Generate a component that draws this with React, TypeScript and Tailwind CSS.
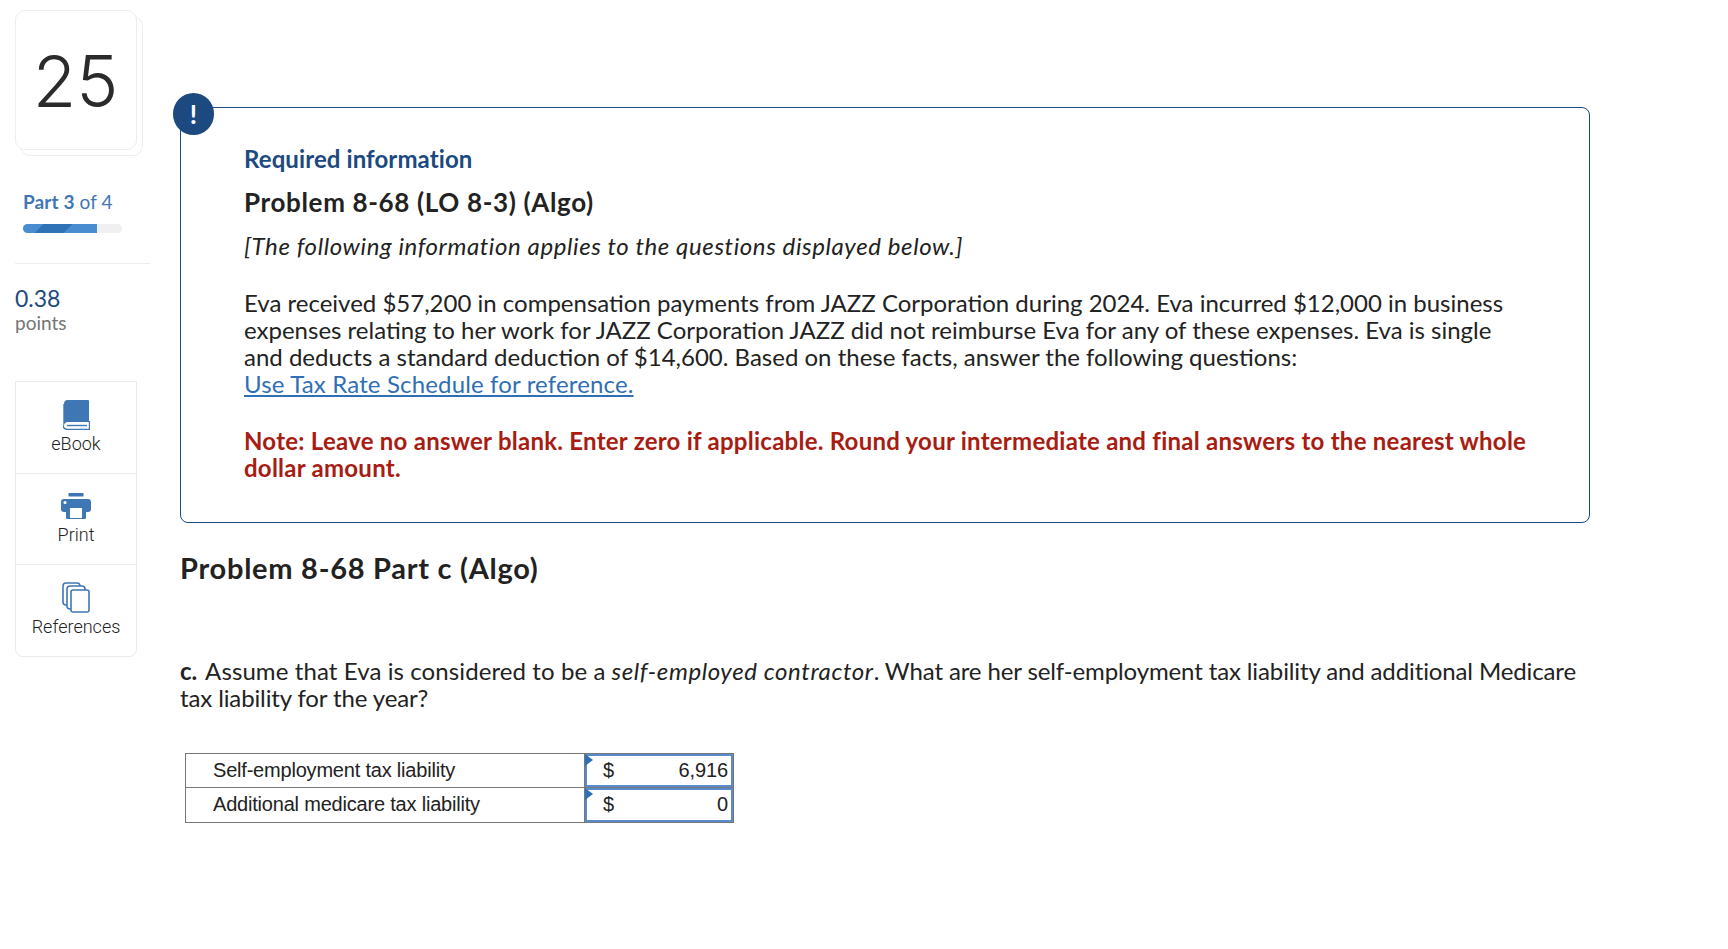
const sans = "font-['Lato','Open_Sans',sans-serif]";

function BookIcon() {
  return (
    <svg width="27" height="30" viewBox="0 0 27 30">
      <path d="M4 0H25a1 1 0 0 1 1 1V22H5a4 4 0 0 0-4 3.5V4a4 4 0 0 1 3-4Z" fill="#3f77b5" />
      <path d="M0 4V25a4.5 4.5 0 0 0 4.5 4.5H26.5V21" fill="none" stroke="#3f77b5" strokeWidth="1.4" />
      <path d="M4 25.500H24" stroke="#3f77b5" strokeWidth="1.4" />
    </svg>
  );
}

function PrintIcon() {
  return (
    <svg width="30" height="26" viewBox="0 0 30 26">
      <rect x="7.500" y="0" width="15" height="3.500" fill="#3f77b5" />
      <path d="M3 6H27a3 3 0 0 1 3 3V16a3 3 0 0 1-3 3H25V25a1 1 0 0 1-1 1H6a1 1 0 0 1-1-1V19H3a3 3 0 0 1-3-3V9a3 3 0 0 1 3-3Z" fill="#3f77b5" />
      <rect x="9" y="15" width="12" height="10" fill="#fff" />
      <circle cx="4" cy="9.500" r="1.500" fill="#fff" />
    </svg>
  );
}

function CopiesIcon() {
  return (
    <svg width="28" height="31" viewBox="0 0 28 31" fill="#fff" stroke="#3f77b5" strokeWidth="1.6">
      <rect x="1" y="1" width="17" height="22" rx="3" />
      <rect x="5" y="4" width="18" height="23" rx="3" />
      <rect x="9" y="8" width="18" height="22" rx="2" />
    </svg>
  );
}

function Tool({ icon, label, cls }: { icon: React.ReactNode; label: string; cls: string }) {
  return (
    <div className={`flex flex-col items-center gap-[4px] border-[#ebebeb] ${cls}`}>
      <div className="h-[31px] flex items-center">{icon}</div>
      <span className="font-['Roboto',sans-serif] font-light text-[18px] leading-[20px] text-[#222]">{label}</span>
    </div>
  );
}

function Row({ label, value, last }: { label: string; value: string; last?: boolean }) {
  return (
    <tr className={last ? "h-[35px]" : "h-[34px]"}>
      <td className={`w-[399px] border-l border-[#777] border-t ${last ? "border-b" : ""} pl-[27px] ${last ? "pb-[2px]" : "pb-[1px]"} font-['Liberation_Sans',sans-serif] text-[20px] tracking-[-0.2px] text-[#222]`}>
        {label}
      </td>
      <td className="w-[149px] border border-[#777] p-0 font-['Liberation_Sans',sans-serif] text-[20px] tracking-[-0.1px] text-[#222]">
        <div className={`relative ${last ? "h-[34px]" : "h-[33px]"} border-2 border-[#5b8bcb] flex justify-between items-center pl-[16px] pr-[3px] pb-[2px]`}>
          <span className="absolute left-[-2px] top-[-2px] w-0 h-0 border-y-[6px] border-y-transparent border-l-[8px] border-l-[#2f6fb5]" />
          <span>$</span>
          <span>{value}</span>
        </div>
      </td>
    </tr>
  );
}

export default function App() {
  return (
    <div className={`flex min-h-[949px] bg-white ${sans} text-[#222]`}>
      <aside className="w-[180px] shrink-0 pl-[15px] pt-[10px]">
        <div className="relative w-[122px] h-[140px] mb-[40px]">
          <div className="absolute left-[5px] top-[6px] w-[123px] h-[140px] rounded-[10px] border border-[#eeeeee] bg-white" />
          <div className="absolute inset-0 rounded-[10px] border border-[#eeeeee] bg-white flex items-center justify-center">
            <span className="font-['Inter',sans-serif] font-light text-[71px] leading-none text-[#2b2b2b] mt-[2px] ml-[-1px]">25</span>
          </div>
        </div>
        <div className="pl-[8px] text-[19px] leading-[24px] tracking-[0.1px] text-[#3f77b5]">
          <b>Part 3</b> of 4
        </div>
        <div className="ml-[8px] mt-[10px] w-[99px] h-[9px] rounded-full bg-[#f0f0f0] overflow-hidden">
          <div className="h-full w-[74px] bg-[linear-gradient(135deg,#4a8cd0_0%,#4a8cd0_25%,#2f72b5_25%,#2f72b5_60%,#4a8cd0_60%)]" />
        </div>
        <div className="mt-[30px] w-[135px] border-t border-[#ededed]" />
        <div className="mt-[21px] text-[23px] leading-[26px] text-[#1c4a80]">0.38</div>
        <div className="text-[19px] leading-[24px] text-[#757575]">points</div>
        <div className="mt-[46px] w-[122px] rounded-b-[8px] border border-[#ebebeb]">
          <Tool icon={<BookIcon />} label="eBook" cls="h-[92px] pt-[17px] border-b" />
          <Tool icon={<PrintIcon />} label="Print" cls="h-[91px] pt-[16px] border-b" />
          <Tool icon={<CopiesIcon />} label="References" cls="h-[91px] pt-[17px]" />
        </div>
      </aside>
      <main className="w-[1410px] pt-[107px]">
        <section className="relative h-[416px] rounded-[8px] border border-[#1c4a80] pl-[63px] pr-[60px] pt-[36px]">
          <div className="absolute left-[-8px] top-[-15px] w-[41px] h-[42px] rounded-full bg-[#1c4a80] flex items-center justify-center text-white font-bold text-[26px] leading-none">
            !
          </div>
          <h3 className="text-[24px] leading-[30px] font-bold tracking-[0.1px] text-[#1c4a80]">Required information</h3>
          <h2 className="mt-[13px] text-[26px] leading-[30px] font-bold tracking-[0.65px] text-[#222]">Problem 8-68 (LO 8-3) (Algo)</h2>
          <p className="mt-[14px] text-[24px] leading-[30px] tracking-[0.6px] italic">[The following information applies to the questions displayed below.]</p>
          <p className="mt-[28px] text-[24px] leading-[27px]">
            Eva received $57,200 in compensation payments from JAZZ Corporation during 2024. Eva incurred $12,000 in business expenses relating to her work for JAZZ Corporation JAZZ did not reimburse Eva for any of these expenses. Eva is single and deducts a standard deduction of $14,600. Based on these facts, answer the following questions:
            <br />
            <a className="text-[#2f6fb5] underline tracking-[0.15px]">Use Tax Rate Schedule for reference.</a>
          </p>
          <p className="mt-[30px] text-[24px] leading-[27px] font-bold tracking-[0.25px] text-[#a81c12]">
            Note: Leave no answer blank. Enter zero if applicable. Round your intermediate and final answers to the nearest whole dollar amount.
          </p>
        </section>
        <h2 className="mt-[28px] text-[29px] leading-[34px] font-bold tracking-[0.73px] text-[#222]">Problem 8-68 Part c (Algo)</h2>
        <p className="mt-[72px] text-[24px] leading-[27px] tracking-[-0.12px]">
          <b className="mr-[2px]">c.</b> <span className="tracking-[0.1px]">Assume that Eva is considered to be a</span> <i className="tracking-[0.6px]">self-employed contractor</i>. What are her self-employment tax liability and additional Medicare tax liability for the year?
        </p>
        <table className="mt-[42px] ml-[5px] border-collapse">
          <tbody>
            <Row label="Self-employment tax liability" value="6,916" />
            <Row label="Additional medicare tax liability" value="0" last />
          </tbody>
        </table>
      </main>
    </div>
  );
}
